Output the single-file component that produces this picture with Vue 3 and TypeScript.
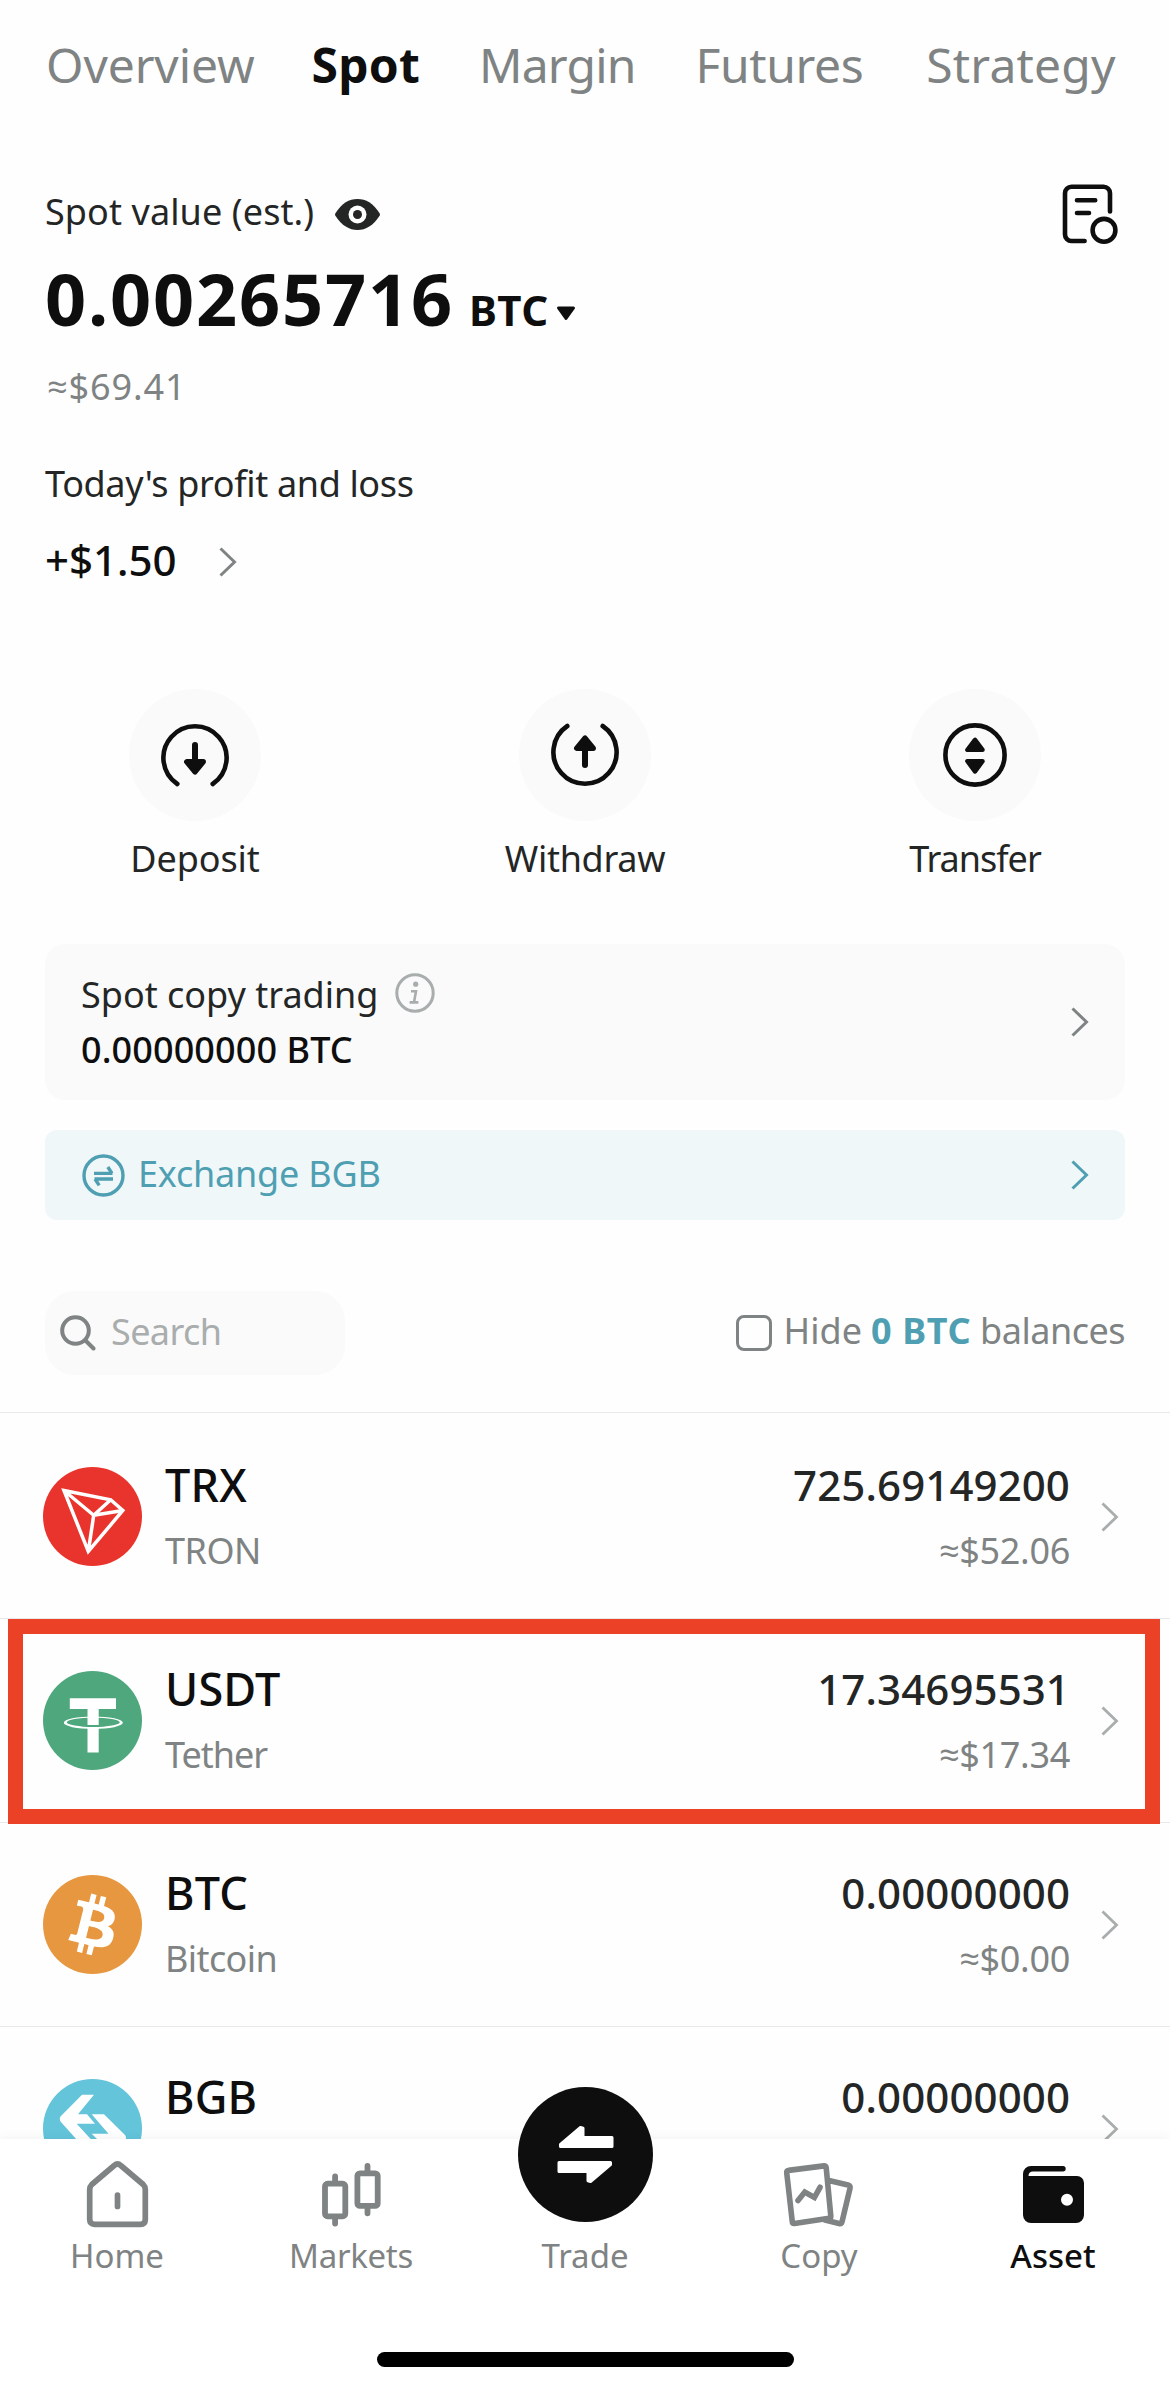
<script setup lang="ts">
interface Tab { label: string; spacing: string }
interface Asset { symbol: string; name?: string; nameSpacing?: string; amount: string; value?: string; highlighted?: boolean }

const activeTab = 'Spot'
const tabs: Tab[] = [
  { label: 'Overview', spacing: '-0.1px' },
  { label: 'Spot', spacing: '0.2px' },
  { label: 'Margin', spacing: '-0.8px' },
  { label: 'Futures', spacing: '-0.4px' },
  { label: 'Strategy', spacing: '0.2px' },
]

const assets: Asset[] = [
  { symbol: 'TRX', name: 'TRON', nameSpacing: '-0.5px', amount: '725.69149200', value: '≈$52.06' },
  { symbol: 'USDT', name: 'Tether', nameSpacing: '-1px', amount: '17.34695531', value: '≈$17.34', highlighted: true },
  { symbol: 'BTC', name: 'Bitcoin', nameSpacing: '-0.6px', amount: '0.00000000', value: '≈$0.00' },
  { symbol: 'BGB', amount: '0.00000000' },
]
</script>

<template>
  <div class="page">
    <main class="content">
      <nav class="tabs">
        <a v-for="t in tabs" :key="t.label" class="tab" :class="{ active: t.label === activeTab }" :style="{ letterSpacing: t.spacing }">{{ t.label }}</a>
      </nav>

      <section class="summary">
        <div class="summary-head">
          <span class="label est">Spot value (est.)</span>
          <svg class="eye" width="45" height="31" viewBox="0 0 45 31">
            <path d="M.4 14.2C7 4.200 14 0 22.500 0S38 4.200 44.600 14.200Q45.300 15.500 44.600 16.800C38 26.800 31 31 22.500 31S7 26.800 .4 16.800Q-.3 15.500 .4 14.200Z" fill="#242626" />
            <circle cx="22.500" cy="15.500" r="9" fill="#fff" />
            <circle cx="22.500" cy="15.500" r="4.500" fill="#242626" />
          </svg>
          <svg class="records" width="60" height="66" viewBox="0 0 60 66" fill="none" stroke="#0e0e0e" stroke-width="4.600" stroke-linecap="round">
            <path d="M50 31.500V13.200A6.500 6.500 0 0 0 43.500 6.700H11.500A6.500 6.500 0 0 0 5 13.200V54.500A6.500 6.500 0 0 0 11.500 61H24.600M17 20.300H35.200M17 33H29" />
            <circle cx="44" cy="50.300" r="11.400" />
          </svg>
        </div>
        <div class="balance">
          <span class="balance-value">0.00265716</span>
          <span class="balance-unit">BTC</span>
          <svg class="caret" width="20" height="15" viewBox="0 0 20 15"><path d="M2.500 2H17.500L10 12.500Z" fill="#0e0e0e" stroke="#0e0e0e" stroke-width="3" stroke-linejoin="round" /></svg>
        </div>
        <div class="fiat">≈$69.41</div>
        <div class="label pnl-label">Today's profit and loss</div>
        <div class="pnl">
          <span>+$1.50</span>
          <svg width="18" height="30" viewBox="0 0 18 30" fill="none" stroke="#7f8383" stroke-width="3"><path d="M1.500 1.500L15.500 15L1.500 28.500" /></svg>
        </div>
      </section>

      <section class="actions">
        <div class="action">
          <svg width="132" height="132" viewBox="0 0 132 132">
            <circle cx="66" cy="66" r="66" fill="#fafafa" />
            <path d="M48.300 95A31.600 31.600 0 1 1 83.700 95" fill="none" stroke="#0e0e0e" stroke-width="4.600" stroke-linecap="round" />
            <path d="M66 56V74" stroke="#0e0e0e" stroke-width="6" stroke-linecap="round" />
            <path d="M57.800 72.800H74.200L66 82.800Z" fill="#0e0e0e" stroke="#0e0e0e" stroke-width="5.500" stroke-linejoin="round" />
          </svg>
          <span class="deposit">Deposit</span>
        </div>
        <div class="action">
          <svg width="132" height="132" viewBox="0 0 132 132">
            <circle cx="66" cy="66" r="66" fill="#fafafa" />
            <path d="M48.300 37A31.600 31.600 0 1 0 83.700 37" fill="none" stroke="#0e0e0e" stroke-width="4.600" stroke-linecap="round" />
            <path d="M66 76V58" stroke="#0e0e0e" stroke-width="6" stroke-linecap="round" />
            <path d="M57.800 59.200H74.200L66 49.200Z" fill="#0e0e0e" stroke="#0e0e0e" stroke-width="5.500" stroke-linejoin="round" />
          </svg>
          <span class="withdraw">Withdraw</span>
        </div>
        <div class="action">
          <svg width="132" height="132" viewBox="0 0 132 132">
            <circle cx="66" cy="66" r="66" fill="#fafafa" />
            <circle cx="66" cy="66" r="29.600" fill="none" stroke="#0e0e0e" stroke-width="4.600" />
            <path d="M58.500 60.800H73.500L66 51Z M58.500 72.200H73.500L66 82.300Z" fill="#0e0e0e" stroke="#0e0e0e" stroke-width="4.600" stroke-linejoin="round" />
          </svg>
          <span class="transfer">Transfer</span>
        </div>
      </section>

      <section class="card">
        <div>
          <div class="card-title">
            <span class="label">Spot copy trading</span>
            <svg width="40" height="40" viewBox="0 0 40 40" fill="none" stroke="#a9adad" stroke-width="3">
              <circle cx="20" cy="20" r="18.200" />
              <path d="M16 18.300H21L19 29.200M14.600 29.400H23.400" stroke-width="2.600" />
              <circle cx="20.700" cy="11.200" r="2.600" fill="#a9adad" stroke="none" />
            </svg>
          </div>
          <div class="card-value">0.00000000 BTC</div>
        </div>
        <svg width="18" height="30" viewBox="0 0 18 30" fill="none" stroke="#7f8383" stroke-width="3"><path d="M1.500 1.500L15.500 15L1.500 28.500" /></svg>
      </section>

      <section class="exchange">
        <svg width="43" height="43" viewBox="0 0 43 43" fill="none" stroke="#4f9fb3" stroke-width="3.400">
          <circle cx="21.500" cy="21.500" r="19.500" />
          <path d="M12 19.400H30.500M30 19.400L25.800 13M31 25H12.500M13 25L17.200 31.400" />
        </svg>
        <span>Exchange BGB</span>
        <svg class="go" width="18" height="30" viewBox="0 0 18 30" fill="none" stroke="#4f9fb3" stroke-width="3"><path d="M1.500 1.500L15.500 15L1.500 28.500" /></svg>
      </section>

      <section class="toolbar">
        <div class="search">
          <svg width="36" height="36" viewBox="0 0 36 36" fill="none" stroke="#7f8383" stroke-width="4" stroke-linecap="round">
            <circle cx="15.500" cy="15.500" r="13.300" /><path d="M25.500 25.500L33.500 33.500" />
          </svg>
          <span>Search</span>
        </div>
        <div class="hide">
          <i class="checkbox"></i>
          <span class="hide-text">Hide</span><b>0 BTC</b><span class="hide-bal">balances</span>
        </div>
      </section>

      <section class="list">
        <div v-for="a in assets" :key="a.symbol" class="row">
          <svg v-if="a.symbol === 'TRX'" class="coin" width="99" height="99" viewBox="0 0 99 99">
            <circle cx="49.500" cy="49.500" r="49.500" fill="#e9342d" />
            <path d="M21 23.500L67.700 32.800L79.800 43.500L45.300 84.500ZM21 23.500L50.700 48.300L67.700 32.800M50.700 48.300L79.800 43.500M50.700 48.300L45.300 84.500" fill="none" stroke="#fff" stroke-width="3.500" />
          </svg>
          <svg v-else-if="a.symbol === 'USDT'" class="coin" width="99" height="99" viewBox="0 0 99 99">
            <circle cx="49.500" cy="49.500" r="49.500" fill="#4fa77d" />
            <path d="M26.800 27.200H73V38H55.700V54H44.500V38H26.800ZM44.500 57H55.700V81.500H44.500Z" fill="#fff" />
            <path fill-rule="evenodd" d="M20.800 51.700A29.500 6.300 0 1 0 79.800 51.700A29.500 6.300 0 1 0 20.800 51.700ZM23.800 51.300A26.500 4.700 0 1 1 76.800 51.300A26.500 4.700 0 1 1 23.800 51.300Z" fill="#fff" />
          </svg>
          <svg v-else-if="a.symbol === 'BTC'" class="coin" width="99" height="99" viewBox="0 0 32 32">
            <circle cx="16" cy="16" r="16" fill="#e7973f" />
            <path fill="#fff" d="M23.189 14.020c.314-2.096-1.283-3.223-3.465-3.975l.708-2.840-1.728-.430-.690 2.765c-.454-.114-.920-.220-1.385-.326l.695-2.783L15.596 6l-.708 2.839c-.376-.086-.746-.170-1.104-.260l.002-.009-2.384-.595-.460 1.846s1.283.294 1.256.312c.700.175.826.638.805 1.006l-.806 3.235c.048.012.110.030.180.057l-.183-.045-1.130 4.532c-.086.212-.303.531-.793.410.018.025-1.256-.313-1.256-.313l-.858 1.978 2.250.561c.418.105.828.215 1.231.318l-.715 2.872 1.727.430.708-2.840c.472.127.930.245 1.378.357l-.706 2.828 1.728.430.715-2.866c2.948.558 5.164.333 6.097-2.333.752-2.146-.037-3.385-1.588-4.192 1.130-.260 1.980-1.003 2.207-2.538zm-3.950 5.538c-.533 2.147-4.148.986-5.320.695l.950-3.805c1.172.293 4.929.872 4.370 3.110zm.535-5.569c-.487 1.953-3.495.960-4.470.717l.860-3.450c.975.243 4.118.696 3.610 2.733z" />
          </svg>
          <svg v-else class="coin" width="99" height="99" viewBox="0 0 99 99">
            <circle cx="49.500" cy="49.500" r="49.500" fill="#63c4da" />
            <path d="M39 15.700H51L35 35.300H44L52 44.800H33.700L60 73.300H45L17.500 42.500Q16 40 17.500 37.500ZM48.700 35.300H61L82 56Q84 58.500 82 61L60 83H48L66 63.500L55.500 61.500L48.700 54.700H65.500Z" fill="#fff" />
          </svg>
          <div class="coin-text">
            <span class="symbol">{{ a.symbol }}</span>
            <span class="name" :style="{ letterSpacing: a.nameSpacing }">{{ a.name }}</span>
          </div>
          <div class="coin-amount">
            <span class="amount">{{ a.amount }}</span>
            <span class="value">{{ a.value }}</span>
          </div>
          <svg class="row-go" width="18" height="30" viewBox="0 0 18 30" fill="none" stroke="#a9adad" stroke-width="2.800"><path d="M1.500 1.500L15.500 15L1.500 28.500" /></svg>
          <div v-if="a.highlighted" class="highlight"></div>
        </div>
      </section>
    </main>

    <footer class="bottom">
      <div class="nav">
        <div class="nav-item">
          <svg class="nav-icon" width="67" height="72" viewBox="0 0 67 72" fill="none" stroke="#7f8383" stroke-width="5.700" stroke-linecap="round" stroke-linejoin="round">
            <path d="M30.200 7.500Q33.500 4.500 36.800 7.500L59.200 26.500Q61.300 28.500 61.300 31.500V61.500Q61.300 66.300 56.500 66.300H10.500Q5.700 66.300 5.700 61.500V31.500Q5.700 28.500 7.800 26.500ZM33.500 37.200V48.500" />
          </svg>
          <span>Home</span>
        </div>
        <div class="nav-item">
          <svg class="nav-icon" width="67" height="72" viewBox="0 0 67 72" fill="none" stroke="#7f8383" stroke-width="5.800" stroke-linecap="round">
            <rect x="7" y="25.700" width="20.300" height="32.600" rx="2.500" /><rect x="39.400" y="15.300" width="20.300" height="32.600" rx="2.500" />
            <path d="M17.100 18.500V24M17.100 60V65.500M49.500 8V14M49.500 50V55.300" />
          </svg>
          <span class="markets">Markets</span>
        </div>
        <div class="nav-item">
          <svg class="trade-icon" width="135" height="135" viewBox="0 0 135 135">
            <circle cx="67.500" cy="67.500" r="67.500" fill="#0e0e0e" />
            <g fill="#fff" stroke="#fff" stroke-width="3" stroke-linejoin="round">
              <path d="M42.500 57.500L62.500 40.500L65 41.300V50.500H94V59.500H42.500Z" />
              <path d="M92.500 77.500L72.500 94.500L70 93.700V84.500H41V75.500H92.500Z" />
            </g>
          </svg>
          <span>Trade</span>
        </div>
        <div class="nav-item">
          <svg class="nav-icon" width="81" height="72" viewBox="0 0 81 72" fill="none" stroke="#7f8383" stroke-width="5.600" stroke-linecap="round" stroke-linejoin="round">
            <path d="M9.500 12.400L45 7.900Q47 7.700 47.200 9.700L51.800 58Q52 60 50 60.300L15.500 65.500Q13.500 65.700 13.300 63.700L7.700 14.800Q7.500 12.700 9.500 12.400ZM51 22.700L69 27Q71.500 27.800 71 30.300L63 63.800Q62.400 66 60 65.500L46 62" />
            <path d="M19 42.500L25.800 34L35.400 39.500L41 29.300" stroke-linejoin="miter" />
          </svg>
          <span>Copy</span>
        </div>
        <div class="nav-item current">
          <svg class="nav-icon" width="67" height="72" viewBox="0 0 67 72">
            <path fill="#0e0e0e" fill-rule="evenodd" d="M3 17V16A8 8 0 0 1 11 8H43A2.700 2.700 0 0 1 43 13.400H13Q8.500 13.400 8.500 18H57A7 7 0 0 1 64 25V57A8 8 0 0 1 56 65H11A8 8 0 0 1 3 57ZM47 35.700A6 6 0 1 0 47 47.700A6 6 0 1 0 47 35.700Z" />
          </svg>
          <span>Asset</span>
        </div>
      </div>
      <div class="home-bar"></div>
    </footer>
  </div>
</template>

<style>
body { margin: 0; background: #fff; }
</style>

<style scoped>
.page { width: 1170px; height: 2391px; overflow: hidden; background: #fefefe; font-family: "Noto Sans", "Open Sans", sans-serif; font-size: 36px; line-height: 48px; color: #242626; display: flex; flex-direction: column; white-space: nowrap; }
.page * { box-sizing: border-box; }
svg { display: block; flex: none; }
.content { height: 2139px; flex: none; overflow: hidden; }
.tabs { display: flex; padding: 41px 45px 0 46px; font-size: 48px; color: #7f8383; }
.tab { margin-right: 57px; }
.tab:nth-child(2) { margin-right: 59px; }
.tab:nth-child(3) { margin-right: 60px; }
.tab:nth-child(4) { margin-right: 63px; }
.tab:last-child { margin-right: 0; }
.tab.active { color: #0e0e0e; font-weight: 700; }
.summary { padding: 0 45px; margin-top: 98px; }
.summary-head { display: flex; align-items: center; height: 48px; }
.est { margin-top: 2px; letter-spacing: 0.1px; }
.eye { margin: 7px 0 0 21px; }
.records { margin: 0 5px 0 auto; transform: translateY(2px); }
.balance { display: flex; align-items: baseline; margin-top: 21px; height: 84px; line-height: 85px; color: #0e0e0e; font-weight: 700; }
.balance-value { font-size: 72px; letter-spacing: 1.8px; }
.balance-unit { font-size: 42px; letter-spacing: 0.5px; margin-left: 15px; }
.caret { margin-left: 7px; transform: translateY(-5px); }
.fiat { margin: 23px 0 0 2px; color: #7f8383; letter-spacing: 0.9px; }
.pnl-label { margin-top: 49px; letter-spacing: -0.35px; }
.pnl { display: flex; align-items: center; gap: 42px; margin-top: 28px; font-size: 42px; font-weight: 500; color: #0e0e0e; }
.pnl svg { margin-top: 3px; }
.actions { display: grid; grid-template-columns: repeat(3, 1fr); margin-top: 105px; }
.action { display: flex; flex-direction: column; align-items: center; gap: 14px; }
.deposit { letter-spacing: -0.1px; }
.withdraw { letter-spacing: -0.3px; }
.transfer { letter-spacing: -1px; }
.card { display: flex; justify-content: space-between; align-items: center; margin: 61px 45px 0; padding: 0 36px 3px 36px; height: 156px; border-radius: 20px; background: #fafafa; }
.card-title { display: flex; align-items: center; gap: 17px; }
.card-title .label { margin-top: 2px; margin-bottom: -2px; }
.card-value { margin-top: 9px; margin-bottom: -2px; color: #0e0e0e; font-weight: 500; letter-spacing: 0.1px; }
.card > svg { margin-top: 3px; }
.exchange { display: flex; align-items: center; gap: 13px; margin: 30px 45px 0; padding: 0 36px 0 37px; height: 90px; border-radius: 12px; background: #eff7f9; color: #4f9fb3; }
.exchange span { margin-top: -2px; letter-spacing: -0.2px; }
.go { margin-left: auto; }
.toolbar { display: flex; justify-content: space-between; align-items: center; margin-top: 71px; padding: 0 45px; height: 122px; padding-bottom: 37px; border-bottom: 1px solid #e8e9e9; }
.search { display: flex; align-items: center; gap: 15px; width: 300px; height: 84px; padding-left: 15px; border-radius: 30px; background: #fafafa; color: #a9adad; letter-spacing: -0.6px; }
.search span { margin-top: -2px; }
.hide { display: flex; align-items: center; color: #7f8383; margin-top: -4px; }
.checkbox { width: 36px; height: 36px; border: 3px solid #7f8383; border-radius: 8px; margin: 4px 12px 0 0; }
.hide b { color: #4f9fb3; letter-spacing: 0.6px; margin: 0 9px 0 9px; }
.hide-bal { letter-spacing: -0.5px; }
.list { margin-top: 2px; }
.row { position: relative; display: flex; align-items: center; height: 204px; padding: 0 51px 0 43px; border-bottom: 1px solid #e8e9e9; }
.coin-text, .coin-amount { display: flex; flex-direction: column; gap: 18px; margin-top: 2px; }
.coin-text { margin-left: 23px; }
.symbol { font-size: 45px; font-weight: 500; color: #0e0e0e; letter-spacing: 0.2px; }
.name, .value { color: #7f8383; min-height: 48px; }
.coin-amount { margin-left: auto; align-items: flex-end; }
.amount { font-size: 42px; font-weight: 500; letter-spacing: 0.1px; }
.value { letter-spacing: -0.3px; }
.row-go { margin-left: 31px; }
.highlight { position: absolute; top: 0; left: 8px; width: 1152px; height: 205px; border: 15px solid #eb4127; z-index: 1; }
.bottom { position: relative; flex: none; height: 252px; background: #fff; box-shadow: 0 0 12px rgba(0, 0, 0, 0.06); }
.nav { display: grid; grid-template-columns: repeat(5, 1fr); height: 213px; }
.nav-item { display: flex; flex-direction: column; align-items: center; justify-content: flex-end; height: 138px; font-size: 33px; line-height: 42px; color: #7f8383; }
.nav-icon { margin-bottom: 5px; }
.trade-icon { margin-bottom: 13px; }
.markets { letter-spacing: -0.3px; }
.current { color: #0e0e0e; font-weight: 500; }
.home-bar { width: 417px; height: 15px; margin: 0 auto; border-radius: 8px; background: #000; }
</style>
